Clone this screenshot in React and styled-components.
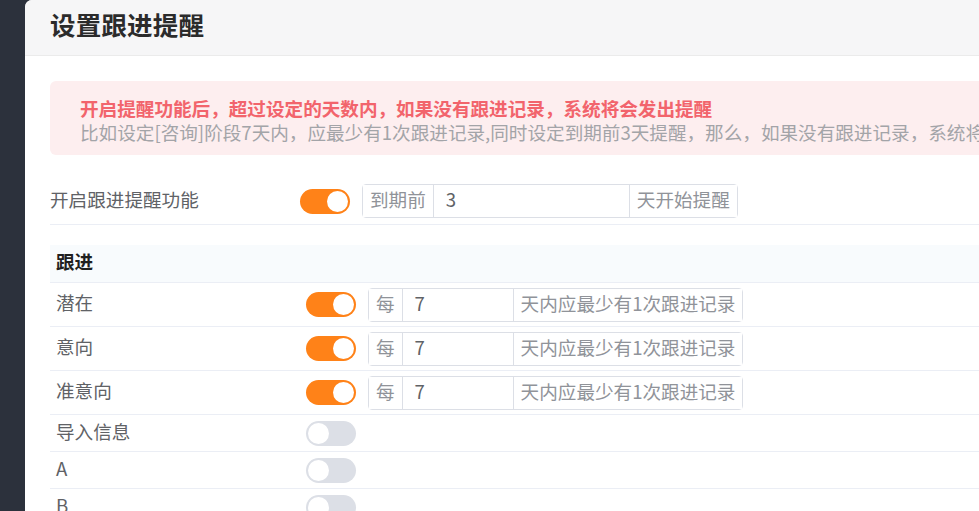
import React from "react";
import styled, { createGlobalStyle } from "styled-components";

const Global = createGlobalStyle`
  html, body { margin: 0; padding: 0; overflow: hidden; background: #2c313c; }
  body { font-family: "Microsoft YaHei", "Noto Sans CJK SC", "Noto Sans", sans-serif; }
  * { box-sizing: border-box; }
`;

const Shell = styled.div`
  display: flex;
  width: 1400px;
  height: 511px;
  background: #2c313c;
`;

const Side = styled.div`
  width: 25px;
  flex: none;
`;

const Dialog = styled.div`
  flex: 1;
  background: #fff;
  border-top-left-radius: 7px;
  overflow: hidden;
`;

const Header = styled.div`
  height: 56px;
  background: #f6f6f7;
  border-bottom: 1px solid #ebebeb;
  display: flex;
  align-items: center;
  padding: 0 0 7px 25px;
`;

const Title = styled.h2`
  margin: 0;
  font-size: 25.5px;
  line-height: 30px;
  font-weight: 700;
  color: #2b2b2b;
  letter-spacing: 0.2px;
`;

const Body = styled.div`
  padding: 25px 25px 0 25px;
`;

const Alert = styled.div`
  background: #fdeeef;
  border-radius: 6px;
  height: 74px;
  padding: 15px 30px 0;
  white-space: nowrap;
  display: flex;
  flex-direction: column;
  line-height: 24px;
  font-size: 18.6px;
`;

const AlertTitle = styled.div`
  color: #f2646c;
  font-weight: 700;
`;

const AlertText = styled.div`
  color: #a3a4a8;
`;

const MainRow = styled.div`
  display: flex;
  align-items: center;
  margin-top: 29px;
  padding-bottom: 6px;
  border-bottom: 1px solid #ebeef5;
`;

const Label = styled.div`
  width: ${(p) => p.$w}px;
  flex: none;
  font-size: 18.6px;
  line-height: 24px;
  padding-bottom: 5px;
  color: #606266;
  font-weight: ${(p) => (p.$bold ? 700 : 400)};
  ${(p) => p.$bold && "color: #1f1f1f;"}
`;

const Switch = styled.span`
  width: 50px;
  height: 25px;
  border-radius: 13px;
  flex: none;
  position: relative;
  background: ${(p) => (p.$on ? "#ff8218" : "#dcdfe6")};
  &::after {
    content: "";
    position: absolute;
    top: 2px;
    left: ${(p) => (p.$on ? "27px" : "2px")};
    width: 21px;
    height: 21px;
    border-radius: 50%;
    background: #fff;
  }
`;

const Group = styled.div`
  display: flex;
  margin-left: 12px;
  height: 34px;
  border: 1px solid #dcdfe6;
  border-radius: 4px;
  font-size: 18.6px;
  line-height: 24px;
  background: #fff;
`;

const Addon = styled.span`
  display: flex;
  align-items: center;
  padding: 0 7px 4px;
  color: #909399;
  background: #fff;
  ${(p) => (p.$left ? "border-right" : "border-left")}: 1px solid #dcdfe6;
`;

const Value = styled.span`
  width: ${(p) => p.$w}px;
  display: flex;
  align-items: center;
  padding: 0 0 4px 12px;
  color: #606266;
`;

const Table = styled.div`
  margin-top: 20px;
`;

const SectionHead = styled.div`
  height: 38px;
  background: #f8fbfd;
  display: flex;
  align-items: center;
  padding-left: 6px;
  border-bottom: 1px solid #ebeef5;
`;

const Row = styled.div`
  display: flex;
  align-items: center;
  height: ${(p) => (p.$tall ? 44 : 37)}px;
  padding-left: 6px;
  border-bottom: 1px solid #ebeef5;
`;

const rows = [
  { name: "潜在", on: true },
  { name: "意向", on: true },
  { name: "准意向", on: true },
  { name: "导入信息", on: false },
  { name: "A", on: false },
  { name: "B", on: false },
];

export default function App() {
  return (
    <>
      <Global />
      <Shell>
        <Side />
        <Dialog>
          <Header>
            <Title>设置跟进提醒</Title>
          </Header>
          <Body>
            <Alert>
              <AlertTitle>开启提醒功能后，超过设定的天数内，如果没有跟进记录，系统将会发出提醒</AlertTitle>
              <AlertText>
                比如设定[咨询]阶段7天内，应最少有1次跟进记录,同时设定到期前3天提醒，那么，如果没有跟进记录，系统将会在第4天发出提醒
              </AlertText>
            </Alert>
            <MainRow>
              <Label $w={250}>开启跟进提醒功能</Label>
              <Switch $on />
              <Group>
                <Addon $left>到期前</Addon>
                <Value $w={195}>3</Value>
                <Addon>天开始提醒</Addon>
              </Group>
            </MainRow>
            <Table>
              <SectionHead>
                <Label $w={250} $bold>跟进</Label>
              </SectionHead>
              {rows.map((r) => (
                <Row key={r.name} $tall={r.on}>
                  <Label $w={250}>{r.name}</Label>
                  <Switch $on={r.on} />
                  {r.on && (
                    <Group>
                      <Addon $left>每</Addon>
                      <Value $w={110}>7</Value>
                      <Addon>天内应最少有1次跟进记录</Addon>
                    </Group>
                  )}
                </Row>
              ))}
            </Table>
          </Body>
        </Dialog>
      </Shell>
    </>
  );
}
